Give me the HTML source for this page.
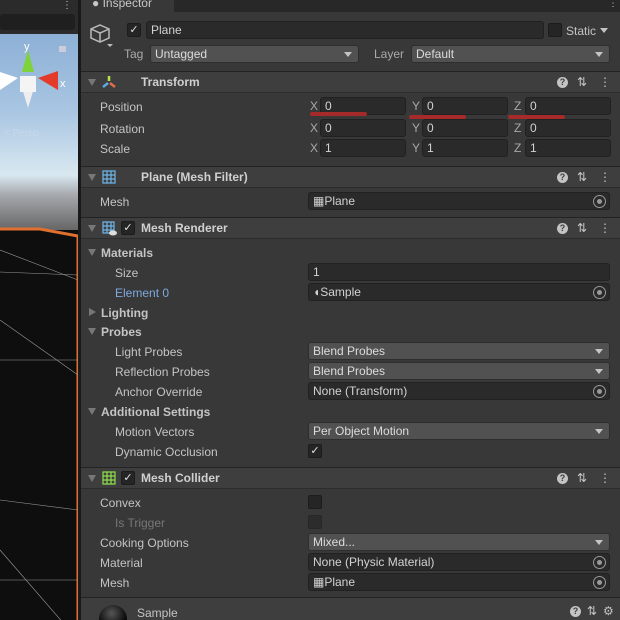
<!DOCTYPE html><html><head><style>
*{margin:0;padding:0;box-sizing:border-box}
html,body{width:620px;height:620px;overflow:hidden}
body{background:#383838;font-family:"Liberation Sans",sans-serif;font-size:12px;color:#c4c4c4;position:relative}
.a{position:absolute}
.l{position:absolute;white-space:nowrap;line-height:14px}
.f{position:absolute;background:#2a2a2a;border:1px solid #212121;border-radius:3px;height:18px;line-height:16px;padding-left:4px;color:#d2d2d2;white-space:nowrap}
.d{position:absolute;background:#515151;border:1px solid #2e2e2e;border-radius:3px;height:18px;line-height:16px;padding-left:4px;color:#dcdcdc}
.d:after{content:"";position:absolute;right:6px;top:6px;border-left:4px solid transparent;border-right:4px solid transparent;border-top:5px solid #c4c4c4}
.h{position:absolute;left:81px;right:0;height:22px;background:#3e3e3e;border-top:1px solid #232323;border-bottom:1px solid #2c2c2c}
.h b{position:absolute;top:3px;font-weight:bold;color:#d0d0d0}
.tri{position:absolute;width:0;height:0;border-left:4px solid transparent;border-right:4px solid transparent;border-top:7px solid #777}
.trr{position:absolute;width:0;height:0;border-top:4px solid transparent;border-bottom:4px solid transparent;border-left:7px solid #777}
.cb{position:absolute;width:14px;height:14px;background:#252525;border:1px solid #1c1c1c;border-radius:2px;color:#e0e0e0;font-size:11px;line-height:12px;text-align:center}
.q{position:absolute;width:11px;height:11px;border-radius:50%;background:#c4c4c4;color:#3e3e3e;font-size:9px;font-weight:bold;line-height:11px;text-align:center}
.sl{position:absolute;font-size:12px;color:#c4c4c4}
.tg{position:absolute;right:3px;top:2px;width:13px;height:13px;border:1.5px solid #999;border-radius:50%}
.tg:after{content:"";position:absolute;left:2.5px;top:2.5px;width:5px;height:5px;border-radius:50%;background:#999}
.xl{position:absolute;color:#a8a8a8}
</style></head><body>
<div class="a" style="left:0;top:0;width:78px;height:620px;background:#0e0e0e"></div>
<div class="a" style="left:0;top:0;width:78px;height:12px;background:#2b2b2b"></div>
<div class="a" style="left:62px;top:0;color:#ccc;font-size:10px">⋮</div>
<div class="a" style="left:0;top:12px;width:78px;height:22px;background:#2b2b2b"></div>
<div class="a" style="left:0;top:14px;width:75px;height:16px;background:#1f1f1f;border-radius:3px"></div>
<div class="a" style="left:0;top:34px;width:78px;height:196px;background:linear-gradient(#8db0d6 0%,#a9c6e2 40%,#d9e8f0 72%,#a6a9ad 82%,#666 100%)"></div>
<svg class="a" style="left:0;top:220px" width="80" height="400">
<path d="M0 9 L40 9 L78 16 L78 400" stroke="#e07030" stroke-width="3" fill="#0e0e0e"/>
<g stroke="#9a9a9a" stroke-width="0.6" fill="none"><path d="M0 30 L78 60"/><path d="M0 52 L78 55"/><path d="M0 100 L78 155"/><path d="M0 140 L78 140"/><path d="M0 280 L78 290"/><path d="M0 330 L78 420"/><path d="M0 360 L78 360"/></g>
</svg>
<svg class="a" style="left:0;top:38px" width="70" height="100">
<polygon points="28,12 22,34 34,34" fill="#7fd23a"/>
<polygon points="38,40 58,33 58,52" fill="#e23b2b"/>
<polygon points="18,40 0,34 0,52" fill="#fff"/>
<polygon points="28,70 22,50 34,50" fill="#eee"/>
<rect x="20" y="38" width="16" height="16" fill="#f4f4f4"/>
<text x="24" y="12" font-size="11" fill="#fff" font-family="Liberation Sans">y</text>
<text x="60" y="49" font-size="11" fill="#fff" font-family="Liberation Sans">x</text>
<rect x="59" y="8" width="7" height="6" fill="#ccd"/>
<text x="4" y="98" font-size="10" fill="#c8d8ea" font-family="Liberation Sans">&lt; Persp</text>
</svg>
<div class="a" style="left:78px;top:0;width:3px;height:620px;background:#191919"></div>
<div class="a" style="left:81px;top:0;width:539px;height:12px;background:#282828"></div>
<div class="a" style="left:81px;top:0;width:93px;height:12px;background:#383838"></div>
<div class="l" style="left:92px;top:-4px;font-size:12px;color:#c8c8c8">● Inspector</div>
<div class="a" style="left:608px;top:-2px;font-size:10px">⋮</div>
<svg class="a" style="left:88px;top:22px" width="26" height="26"><path d="M12 3 L21 7 L21 16 L12 20 L3 16 L3 7 Z M3 7 L12 11 L21 7 M12 11 L12 20" stroke="#bbb" stroke-width="1.5" fill="none"/><polygon points="19,22 25,22 22,25" fill="#bbb"/></svg>
<div class="cb" style="left:127px;top:23px">✓</div>
<div class="f" style="left:146px;top:21px;width:398px">Plane</div>
<div class="cb" style="left:548px;top:23px"></div>
<div class="l" style="left:566px;top:24px">Static</div>
<div class="a" style="left:600px;top:28px;border-left:4px solid transparent;border-right:4px solid transparent;border-top:5px solid #c4c4c4"></div>
<div class="l" style="left:124px;top:47px;color:#aaa">Tag</div>
<div class="d" style="left:150px;top:45px;width:209px">Untagged</div>
<div class="l" style="left:374px;top:47px;color:#aaa">Layer</div>
<div class="d" style="left:411px;top:45px;width:199px">Default</div>

<div class="h" style="top:71px"><div class="tri" style="left:7px;top:7px"></div>
<svg class="a" style="left:20px;top:3px" width="16" height="14"><path d="M8 1 L8 6" stroke="#b5e34a" stroke-width="2.5"/><path d="M7 8 L2 12" stroke="#5aa9e6" stroke-width="2.5"/><path d="M9 8 L14 12" stroke="#e46a4a" stroke-width="2.5"/></svg>
<b style="left:60px">Transform</b><div class="q" style="left:476px;top:5px">?</div><div class="sl" style="left:496px;top:3px">⇅</div><div class="sl" style="left:518px;top:3px">⋮</div></div>
<div class="l" style="left:100px;top:100px">Position</div>
<div class="l" style="left:100px;top:122px">Rotation</div>
<div class="l" style="left:100px;top:142px">Scale</div>
<div class="xl" style="left:310px;top:99px">X</div><div class="f" style="left:320px;top:97px;width:86px">0</div>
<div class="xl" style="left:412px;top:99px">Y</div><div class="f" style="left:422px;top:97px;width:86px">0</div>
<div class="xl" style="left:514px;top:99px">Z</div><div class="f" style="left:525px;top:97px;width:86px">0</div>
<div class="a" style="left:310px;top:112px;width:57px;height:4px;background:#a52a2a;border-radius:2px"></div>
<div class="a" style="left:409px;top:115px;width:57px;height:4px;background:#a52a2a;border-radius:2px"></div>
<div class="a" style="left:508px;top:115px;width:57px;height:4px;background:#a52a2a;border-radius:2px"></div>
<div class="xl" style="left:310px;top:121px">X</div><div class="f" style="left:320px;top:119px;width:86px">0</div>
<div class="xl" style="left:412px;top:121px">Y</div><div class="f" style="left:422px;top:119px;width:86px">0</div>
<div class="xl" style="left:514px;top:121px">Z</div><div class="f" style="left:525px;top:119px;width:86px">0</div>
<div class="xl" style="left:310px;top:141px">X</div><div class="f" style="left:320px;top:139px;width:86px">1</div>
<div class="xl" style="left:412px;top:141px">Y</div><div class="f" style="left:422px;top:139px;width:86px">1</div>
<div class="xl" style="left:514px;top:141px">Z</div><div class="f" style="left:525px;top:139px;width:86px">1</div>

<div class="h" style="top:166px"><div class="tri" style="left:7px;top:7px"></div>
<svg class="a" style="left:21px;top:3px" width="14" height="14"><path d="M1 1H13V13H1Z M5 1V13 M9 1V13 M1 5H13 M1 9H13" stroke="#6fb5e8" stroke-width="1.2" fill="none"/></svg>
<b style="left:60px">Plane (Mesh Filter)</b><div class="q" style="left:476px;top:5px">?</div><div class="sl" style="left:496px;top:3px">⇅</div><div class="sl" style="left:518px;top:3px">⋮</div></div>
<div class="l" style="left:100px;top:195px">Mesh</div>
<div class="f" style="left:308px;top:192px;width:302px">▦Plane<div class="tg"></div></div>

<div class="h" style="top:217px"><div class="tri" style="left:7px;top:7px"></div>
<svg class="a" style="left:21px;top:3px" width="16" height="16"><path d="M1 1H12V12H1Z M5 1V12 M9 1V12 M1 5H12 M1 9H12" stroke="#6fb5e8" stroke-width="1.2" fill="none"/><ellipse cx="11" cy="12" rx="4" ry="2.5" fill="#ddd"/></svg>
<div class="cb" style="left:40px;top:3px">✓</div>
<b style="left:60px">Mesh Renderer</b><div class="q" style="left:476px;top:5px">?</div><div class="sl" style="left:496px;top:3px">⇅</div><div class="sl" style="left:518px;top:3px">⋮</div></div>
<div class="tri" style="left:88px;top:249px"></div><div class="l" style="left:101px;top:246px;font-weight:bold">Materials</div>
<div class="l" style="left:115px;top:266px">Size</div>
<div class="f" style="left:308px;top:263px;width:302px">1</div>
<div class="l" style="left:115px;top:286px;color:#7ea8e0">Element 0</div>
<div class="f" style="left:308px;top:283px;width:302px">◖Sample<div class="tg"></div></div>
<div class="trr" style="left:89px;top:308px"></div><div class="l" style="left:101px;top:306px;font-weight:bold">Lighting</div>
<div class="tri" style="left:88px;top:328px"></div><div class="l" style="left:101px;top:325px;font-weight:bold">Probes</div>
<div class="l" style="left:115px;top:345px">Light Probes</div>
<div class="d" style="left:308px;top:342px;width:302px">Blend Probes</div>
<div class="l" style="left:115px;top:365px">Reflection Probes</div>
<div class="d" style="left:308px;top:362px;width:302px">Blend Probes</div>
<div class="l" style="left:115px;top:385px">Anchor Override</div>
<div class="f" style="left:308px;top:382px;width:302px">None (Transform)<div class="tg"></div></div>
<div class="tri" style="left:88px;top:408px"></div><div class="l" style="left:101px;top:405px;font-weight:bold">Additional Settings</div>
<div class="l" style="left:115px;top:425px">Motion Vectors</div>
<div class="d" style="left:308px;top:422px;width:302px">Per Object Motion</div>
<div class="l" style="left:115px;top:445px">Dynamic Occlusion</div>
<div class="cb" style="left:308px;top:444px">✓</div>

<div class="h" style="top:467px"><div class="tri" style="left:7px;top:7px"></div>
<svg class="a" style="left:21px;top:3px" width="14" height="14"><path d="M1 1H13V13H1Z M5 1V13 M9 1V13 M1 5H13 M1 9H13" stroke="#8fe04a" stroke-width="1.2" fill="none"/></svg>
<div class="cb" style="left:40px;top:3px">✓</div>
<b style="left:60px">Mesh Collider</b><div class="q" style="left:476px;top:5px">?</div><div class="sl" style="left:496px;top:3px">⇅</div><div class="sl" style="left:518px;top:3px">⋮</div></div>
<div class="l" style="left:100px;top:496px">Convex</div>
<div class="cb" style="left:308px;top:495px"></div>
<div class="l" style="left:115px;top:516px;color:#777">Is Trigger</div>
<div class="cb" style="left:308px;top:515px;opacity:.6"></div>
<div class="l" style="left:100px;top:536px">Cooking Options</div>
<div class="d" style="left:308px;top:533px;width:302px">Mixed...</div>
<div class="l" style="left:100px;top:556px">Material</div>
<div class="f" style="left:308px;top:553px;width:302px">None (Physic Material)<div class="tg"></div></div>
<div class="l" style="left:100px;top:576px">Mesh</div>
<div class="f" style="left:308px;top:573px;width:302px">▦Plane<div class="tg"></div></div>

<div class="a" style="left:81px;top:597px;width:539px;height:23px;background:#3e3e3e;border-top:1px solid #232323;overflow:hidden">
<div class="a" style="left:18px;top:7px;width:28px;height:28px;border-radius:50%;background:radial-gradient(circle at 45% 30%,#555,#0a0a0a 60%)"></div>
<div class="l" style="left:56px;top:8px">Sample</div>
<div class="q" style="left:489px;top:8px">?</div><div class="sl" style="left:506px;top:6px">⇅</div><div class="sl" style="left:522px;top:6px">⚙</div>
</div>
</body></html>
